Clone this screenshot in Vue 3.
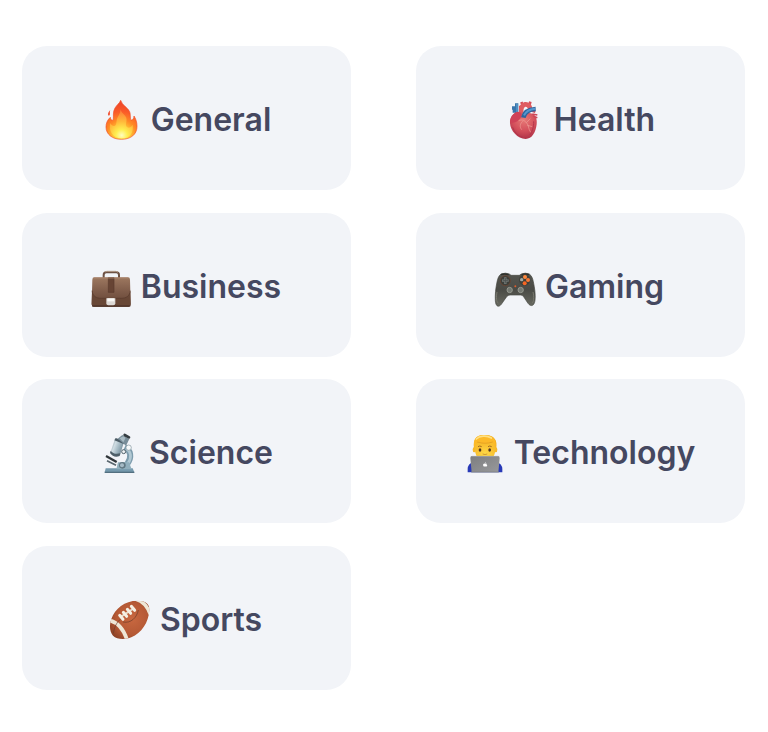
<script setup>
const categories = [
  { id: 'general', label: 'General', box: '0 12 132 132' },
  { id: 'health', label: 'Health', box: '2 12 132 132' },
  { id: 'business', label: 'Business', box: '6 2 132 132' },
  { id: 'gaming', label: 'Gaming', box: '12 2 132 132' },
  { id: 'science', label: 'Science', box: '0 11 132 132' },
  { id: 'technology', label: 'Technology', box: '1 11 132 132' },
  { id: 'sports', label: 'Sports', box: '7 6 132 132' },
]
</script>

<template>
  <main class="grid">
    <button v-for="c in categories" :key="c.id" class="card" type="button">
      <svg class="icon" :viewBox="c.box" aria-hidden="true">
        <g v-if="c.id === 'general'">
          <defs>
            <radialGradient id="flame" gradientUnits="userSpaceOnUse" cx="68" cy="122" r="92">
              <stop offset="0" stop-color="#fff66c" />
              <stop offset=".22" stop-color="#ffd23a" />
              <stop offset=".48" stop-color="#ff8a25" />
              <stop offset=".75" stop-color="#fa5b28" />
              <stop offset="1" stop-color="#f04a2a" />
            </radialGradient>
            <radialGradient id="core" gradientUnits="userSpaceOnUse" cx="68" cy="124" r="70">
              <stop offset="0" stop-color="#fffdc0" />
              <stop offset=".25" stop-color="#ffee50" />
              <stop offset=".6" stop-color="#ffb93a" />
              <stop offset="1" stop-color="#ff9440" stop-opacity=".7" />
            </radialGradient>
          </defs>
          <path d="M65 19c-3 9-12 14-17 23-7 12-4 25-5 34-2 5-8 3-9-6-9 8-13 18-13 29 0 22 19 37 46 37 29 0 47-15 47-39 0-14-4-23-9-31 0 7-4 13-8 12-5-2-1-14-5-25C86 40 70 35 65 19z" fill="url(#flame)" stroke="#f2502a" stroke-width="2" />
          <path d="M64 45c2 14-9 22-11 34-1 9-1 14-5 16-6 3-11-2-14-8-6 24 7 45 34 46 26 0 36-17 33-41-4 7-11 11-16 8-9-6 0-16-3-28-3-10-16-15-18-27z" fill="url(#core)" />
          <path d="M34 48c-5 5-8 10-7 15 2 4 6 1 6-4 0-4-1-6 1-11z" fill="#f1573a" />
        </g>

        <g v-else-if="c.id === 'health'">
          <defs>
            <radialGradient id="heart" gradientUnits="userSpaceOnUse" cx="68" cy="77" r="62">
              <stop offset="0" stop-color="#e87a77" />
              <stop offset=".55" stop-color="#d34f5b" />
              <stop offset="1" stop-color="#a92e45" />
            </radialGradient>
          </defs>
          <path d="M57 58V35M65 36l-5-12M84 36l3-13M88 49l14 4" fill="none" stroke="#d54c58" stroke-width="8" />
          <path d="M60 58c-6-34 27-34 27-10" fill="none" stroke="#df5c61" stroke-width="14" />
          <path d="M46 28v34M32 42h15M34 51h11" fill="none" stroke="#3975ab" stroke-width="10" />
          <path d="M47 30v32" stroke="#5b9dce" stroke-width="4" />
          <path d="M50 53c-16 4-25 17-24 35 1 22 23 47 47 47 19 0 30-20 33-44 2-18-4-30-18-33-13-3-24 3-38-5z" fill="url(#heart)" />
          <path d="M49 53C36 57 27 69 26 84c6 4 18 2 26-6 8-8 12-15 8-22z" fill="#cf4257" />
          <path d="M66 71c3-16 15-25 37-26" fill="none" stroke="#2e659e" stroke-width="14" />
          <path d="M68 64c5-11 16-18 33-20" fill="none" stroke="#5596cd" stroke-width="6" />
          <path d="M93 60l15 3M96 67l12 4" stroke="#ce4657" stroke-width="5" />
          <path d="M52 80c12-5 18 0 24 7 7 7 4 16 12 28M64 82c-9 8-9 17-3 25M75 86l12-12M78 94l15 4" fill="none" stroke="#efa098" stroke-width="2" />
          <path d="M34 100c5 15 16 26 30 30M97 82c1 16-5 34-12 41" fill="none" stroke="#b2354b" stroke-width="3" />
        </g>

        <g v-else-if="c.id === 'business'">
          <defs>
            <linearGradient id="leather" x2="0" y2="1">
              <stop offset="0" stop-color="#9d7860" />
              <stop offset=".5" stop-color="#7d5a48" />
              <stop offset="1" stop-color="#634334" />
            </linearGradient>
          </defs>
          <path d="M50 41v-9q0-8 8-8h30q8 0 8 8v9" fill="none" stroke="#6d5143" stroke-width="6" />
          <path d="M54 23q2-2 7-2h24q6 0 8 3" fill="none" stroke="#b19986" stroke-width="3" />
          <path d="M22 39h101q6 0 6 7l2 74q0 7-6 7H20q-6 0-6-7l2-74q0-7 6-7z" fill="url(#leather)" />
          <path d="M15 80c2 17 13 23 28 23h59c15 0 26-6 28-23l1 40q0 7-6 7H20q-6 0-6-7z" fill="#684736" />
          <path d="M15 79c2 17 13 23 28 23h59c15 0 26-6 28-23" fill="none" stroke="#543729" stroke-width="2" />
          <path d="M64 39h17v45H64z" fill="#674434" />
          <path d="M64 40v44h17V40" fill="none" stroke="#593b2e" stroke-width="2" />
          <path d="M20 41h104" stroke="#b28d73" stroke-width="2" />
          <path d="M15 125h115" stroke="#452d24" stroke-width="3" />
          <path d="M58 102h27v15q0 6-6 6H64q-6 0-6-6z" fill="#ddd9d5" />
          <path d="M61 102h21v9H61z" fill="#faf9f6" />
        </g>

        <g v-else-if="c.id === 'gaming'">
          <defs>
            <linearGradient id="pad" x2="0" y2="1">
              <stop offset="0" stop-color="#555550" />
              <stop offset=".5" stop-color="#4a4b46" />
              <stop offset="1" stop-color="#696a61" />
            </linearGradient>
          </defs>
          <path d="M36 29q14-5 25 0l5 4h25l6-4q12-5 24 0c7 5 10 13 12 23 4 20 7 37 5 56-2 18-13 20-21 9L103 96q-3-4-9-4H63q-6 0-10 5l-16 23c-8 10-17 7-18-11-1-18 1-37 5-56 2-10 5-19 12-24z" fill="url(#pad)" stroke="#44453f" stroke-width="2" />
          <path d="M36 31q10-4 23 0M98 31q11-4 22 0" fill="none" stroke="#2d2f2b" stroke-width="4" />
          <path d="M24 83c-3 16-2 31 4 33M132 83c4 16 2 31-3 33" fill="none" stroke="#79796f" stroke-width="3" />
          <circle cx="49" cy="49" r="15" fill="#3c3f3b" stroke="#75452f" stroke-width="2" />
          <path d="M49 39v20M39 49h20" stroke="#777c79" stroke-width="7" />
          <path d="M49 41v16M41 49h16" stroke="#505552" stroke-width="3" />
          <circle cx="107" cy="47" r="17" fill="#3f413b" />
          <circle cx="108" cy="38" r="6" fill="#ff873c" /><circle cx="117" cy="47" r="6" fill="#fa7634" />
          <circle cx="107" cy="57" r="6" fill="#f56624" /><circle cx="98" cy="46" r="5" fill="#a5a69e" />
          <g fill="#747871" stroke="#94978e" stroke-width="3"><circle cx="62" cy="77" r="8" /><circle cx="95" cy="77" r="8" /></g>
          <circle cx="79" cy="66" r="3" fill="#e05e2d" />
        </g>

        <g v-else-if="c.id === 'science'">
          <defs>
            <linearGradient id="barrel" x1="0" x2="1" y2=".5">
              <stop offset="0" stop-color="#627783" />
              <stop offset=".4" stop-color="#d0dde3" />
              <stop offset=".7" stop-color="#9eb4bf" />
              <stop offset="1" stop-color="#738a96" />
            </linearGradient>
          </defs>
          <path d="M80 60c19 9 22 30 8 49l-7 14" fill="none" stroke="#7d9cad" stroke-width="18" />
          <path d="M84 63c16 10 18 27 6 45l-7 11" fill="none" stroke="#b1c8d3" stroke-width="8" />
          <path d="M23 123h81l5 12H20z" fill="#7599ad" />
          <path d="M20 133h89v4H20z" fill="#536f80" />
          <path d="M60 105h33l8 21H55z" fill="#91afbd" />
          <circle cx="73" cy="114" r="10" fill="#607782" /><circle cx="72" cy="114" r="6" fill="#a6bbc6" />
          <path d="M24 86l32 18" stroke="#30363a" stroke-width="7" />
          <path d="M27 100l27 14" stroke="#59666e" stroke-width="5" />
          <path d="M51 35l27 9-12 39q-17 9-29-7z" fill="url(#barrel)" />
          <path d="M38 70q9 13 29 8l-2 8q-18 7-29-9z" fill="#4e5f69" />
          <path d="M53 32l27 10-3 8-28-11z" fill="#4b5b65" />
          <path d="M59 34l14-11 21 12-10 20z" fill="#788d99" />
          <path d="M65 33l11-6 7 4-7 14z" fill="#a8bac3" />
          <path d="M80 23l13 7" stroke="#343c41" stroke-width="8" stroke-linecap="round" />
          <circle cx="92" cy="61" r="8" fill="#f6f9fa" stroke="#81929b" stroke-width="2" />
          <circle cx="77" cy="73" r="6" fill="#edf0f2" stroke="#53646d" stroke-width="3" />
        </g>

        <g v-else-if="c.id === 'technology'">
          <defs>
            <linearGradient id="laptop" x2="1" y2="1"><stop offset="0" stop-color="#7d7e80" /><stop offset="1" stop-color="#98999b" /></linearGradient>
            <radialGradient id="face" cy=".65"><stop offset="0" stop-color="#ffdc4a" /><stop offset="1" stop-color="#f8be2e" /></radialGradient>
          </defs>
          <path d="M18 135v-10q0-16 18-22h67q19 6 19 22v10z" fill="#2839b7" />
          <path d="M37 65c-4-31 8-42 34-42s38 15 32 42z" fill="#efad20" />
          <ellipse cx="38" cy="67" rx="5" ry="8" fill="#f6b92b" /><ellipse cx="102" cy="67" rx="5" ry="8" fill="#f6b92b" />
          <path d="M40 50q8-7 20-6c20 2 30-4 36 3q5 6 5 18c0 24-14 36-31 36S40 88 40 65z" fill="url(#face)" />
          <path d="M38 60c-5-23 5-36 25-37 25-1 43 7 39 38-6-4-4-12-9-17-14 5-34 5-46 0-4 5-4 13-9 16z" fill="#fcb928" />
          <path d="M44 35c9-10 31-12 45-3" fill="none" stroke="#ffe083" stroke-width="5" stroke-linecap="round" />
          <path d="M47 44c14 5 32 5 46 0" fill="none" stroke="#dc9620" stroke-width="2" />
          <path d="M49 58q5-4 11 0M79 58q5-4 11 0" fill="none" stroke="#a36b20" stroke-width="3" />
          <ellipse cx="55" cy="68" rx="4" ry="5" fill="#513521" /><ellipse cx="84" cy="68" rx="4" ry="5" fill="#513521" />
          <path d="M63 80q7 3 14 0" fill="none" stroke="#b87522" stroke-width="2" />
          <path d="M31 86h78q5 0 5 6l-4 43H30l-4-43q0-6 5-6z" fill="url(#laptop)" />
          <path d="M31 87h79" stroke="#aaacae" stroke-width="2" />
          <path d="M28 134h84" stroke="#7a7c80" stroke-width="2" />
          <path d="M70 109c-6-3-8 6-3 9l3-1 3 1c4-2 5-4 2-6 1-3-2-5-5-3zM70 107q0-3 3-4 0 3-3 4z" fill="#fff" />
        </g>

        <g v-else>
          <defs>
            <radialGradient id="ball" gradientUnits="userSpaceOnUse" cx="79" cy="68" r="80">
              <stop offset="0" stop-color="#c86840" />
              <stop offset=".6" stop-color="#b55935" />
              <stop offset="1" stop-color="#843d23" />
            </radialGradient>
            <clipPath id="ballShape"><path d="M17 69C28 38 57 14 95 14c25 0 37 9 36 29-2 37-24 69-54 81-20 8-44 6-55-5-10-11-12-32-5-50z" /></clipPath>
          </defs>
          <g clip-path="url(#ballShape)">
            <path d="M10 10h125v125H10z" fill="url(#ball)" />
            <path d="M11 73c22 5 43 26 54 61M91 10c22 6 34 20 43 45" fill="none" stroke="#eee7d6" stroke-width="11" />
            <path d="M23 112c4-23 12-37 29-49M52 78c24 5 42-14 46-36" fill="none" stroke="#6c3c2b" stroke-width="2" />
          </g>
          <path d="M43 64l43-28" stroke="#e7dac7" stroke-width="6" />
          <path d="M42 58l10 12M53 49l10 12M65 40l10 12M77 31l10 12" stroke="#f5f0e3" stroke-width="9" stroke-linecap="round" />
        </g>
      </svg>
      <span class="label">{{ c.label }}</span>
    </button>
  </main>
</template>

<style>
body {
  background: #fff;
}
</style>

<style scoped>
.grid {
  display: grid;
  grid-template-columns: 329px 329px;
  grid-auto-rows: 144px;
  column-gap: 64.5px;
  row-gap: 22.7px;
  padding: 46px 22px;
}
.card {
  display: flex;
  align-items: center;
  justify-content: center;
  gap: 7.5px;
  padding: 4px 2.5px 0 0;
  border: 0;
  border-radius: 25px;
  background: #f2f4f8;
  color: #454860;
  font: 600 32px/40px Inter, sans-serif;
}
.icon {
  width: 44px;
  height: 44px;
  flex: none;
}
</style>
